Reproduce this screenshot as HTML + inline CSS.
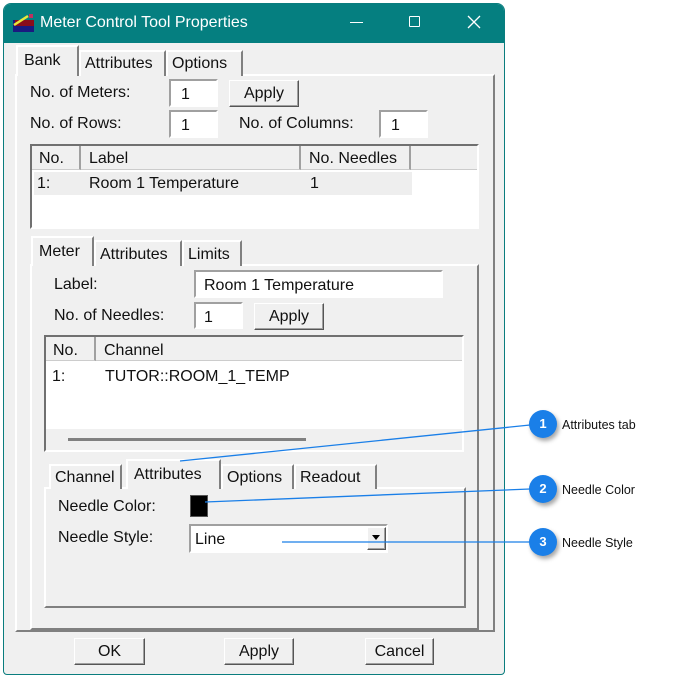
<!DOCTYPE html>
<html><head><meta charset="utf-8"><style>
*{box-sizing:border-box;margin:0;padding:0}
body{width:688px;height:678px;background:#fff;position:relative;overflow:hidden;font-family:"Liberation Sans",Arial,sans-serif;font-size:16px;color:#111}
.a{position:absolute;white-space:nowrap}
.win{left:3px;top:3px;width:502px;height:672px;background:#f0f0f0;border:1px solid #0a7d7e;border-radius:8px 8px 4px 4px;overflow:hidden}
.tb{left:0;top:0;width:500px;height:39px;background:#057f80}
.sunk{border:2px solid;border-color:#a0a0a0 #fff #fff #a0a0a0;background:#fff}
.sunk2{border:2px solid;border-color:#707070 #fff #fff #707070;background:#fff}
.btn{background:#f0f0f0;border:1px solid;border-color:#fff #555 #555 #fff;box-shadow:inset -1px -1px 0 #a0a0a0;text-align:center}
.panel{border:2px solid;border-color:#fff #808080 #808080 #fff}
.tab{background:#f0f0f0;border:2px solid;border-bottom:none;border-color:#fff #808080 #808080 #fff;padding-left:4px}
.hdr{background:#f0f0f0;border-right:2px solid #a0a0a0;border-bottom:1px solid #ccc}
.cir{width:28px;height:28px;border-radius:50%;background:#1a7fe8;color:#fff;font-size:13px;font-weight:bold;text-align:center;line-height:28px;box-shadow:2px 3px 4px rgba(0,0,0,.35)}
.ct{font-size:12.5px;color:#111}
</style></head><body>
<div class="a win">
 <div class="a tb"></div>
</div>
<svg class="a" style="left:13px;top:13px" width="22" height="19"><rect x="0" y="7" width="21" height="12" fill="#1a1a80"/><rect x="2" y="7" width="19" height="6" fill="#8a0d1a"/><path d="M1 12 L15 3" stroke="#e8e83a" stroke-width="2.5"/><rect x="16" y="1" width="4" height="4" fill="#c03060"/></svg>
<div class="a" style="left:40px;top:14px;color:#fff;font-size:16px">Meter Control Tool Properties</div>
<div class="a" style="left:350px;top:22px;width:13px;height:1px;background:#fff"></div>
<div class="a" style="left:409px;top:16px;width:11px;height:11px;border:1px solid #fff;border-radius:1px"></div>
<svg class="a" style="left:467px;top:15px" width="14" height="14"><path d="M1 1L13 13M13 1L1 13" stroke="#fff" stroke-width="1.3"/></svg>

<div class="a panel" style="left:15px;top:74px;width:480px;height:558px"></div>
<div class="a" style="left:477px;top:264px;width:2px;height:364px;background:#808080"></div>
<div class="a tab" style="left:79px;top:50px;width:87px;height:26px;line-height:24px">Attributes</div>
<div class="a tab" style="left:166px;top:50px;width:77px;height:26px;line-height:24px">Options</div>
<div class="a tab" style="left:16px;top:45px;width:63px;height:31px;line-height:28px;padding-left:6px;border-bottom:none">Bank</div>

<div class="a" style="left:30px;top:84px">No. of Meters:</div>
<div class="a sunk" style="left:169px;top:79px;width:49px;height:28px;padding:5px 0 0 10px">1</div>
<div class="a btn" style="left:229px;top:80px;width:70px;height:27px;line-height:26px">Apply</div>
<div class="a" style="left:30px;top:115px">No. of Rows:</div>
<div class="a sunk" style="left:169px;top:110px;width:49px;height:28px;padding:5px 0 0 10px">1</div>
<div class="a" style="left:239px;top:115px">No. of Columns:</div>
<div class="a sunk" style="left:379px;top:110px;width:49px;height:28px;padding:5px 0 0 10px">1</div>

<div class="a sunk2" style="left:30px;top:144px;width:449px;height:85px"></div>
<div class="a hdr" style="left:32px;top:146px;width:49px;height:24px;padding:4px 0 0 7px">No.</div>
<div class="a hdr" style="left:81px;top:146px;width:220px;height:24px;padding:4px 0 0 8px">Label</div>
<div class="a hdr" style="left:301px;top:146px;width:110px;height:24px;padding:4px 0 0 8px">No. Needles</div>
<div class="a" style="left:411px;top:146px;width:66px;height:24px;background:#f0f0f0;border-bottom:1px solid #ccc"></div>
<div class="a" style="left:34px;top:172px;width:378px;height:23px;background:#eeeeee"></div>
<div class="a" style="left:37px;top:175px">1:</div>
<div class="a" style="left:89px;top:175px">Room 1 Temperature</div>
<div class="a" style="left:310px;top:175px">1</div>

<div class="a panel" style="left:30px;top:264px;width:449px;height:366px;border-left-color:#fff"></div>
<div class="a tab" style="left:94px;top:240px;width:88px;height:26px;line-height:25px">Attributes</div>
<div class="a tab" style="left:182px;top:240px;width:60px;height:26px;line-height:25px">Limits</div>
<div class="a tab" style="left:31px;top:236px;width:63px;height:30px;line-height:27px;padding-left:6px">Meter</div>

<div class="a" style="left:54px;top:276px">Label:</div>
<div class="a sunk" style="left:194px;top:270px;width:249px;height:28px;padding:5px 0 0 8px">Room 1 Temperature</div>
<div class="a" style="left:54px;top:307px">No. of Needles:</div>
<div class="a sunk" style="left:194px;top:302px;width:49px;height:27px;padding:5px 0 0 8px">1</div>
<div class="a btn" style="left:254px;top:303px;width:70px;height:27px;line-height:26px">Apply</div>

<div class="a sunk2" style="left:44px;top:335px;width:420px;height:117px;background:#f0f0f0"></div>
<div class="a hdr" style="left:46px;top:337px;width:50px;height:24px;padding:5px 0 0 7px">No.</div>
<div class="a" style="left:96px;top:337px;width:366px;height:24px;padding:5px 0 0 8px;background:#f0f0f0;border-bottom:1px solid #ccc">Channel</div>
<div class="a" style="left:46px;top:361px;width:416px;height:68px;background:#fff"></div>
<div class="a" style="left:52px;top:368px">1:</div>
<div class="a" style="left:105px;top:368px">TUTOR::ROOM_1_TEMP</div>
<div class="a" style="left:68px;top:438px;width:238px;height:3px;background:#808080"></div>

<div class="a panel" style="left:44px;top:487px;width:422px;height:121px"></div>
<div class="a tab" style="left:49px;top:464px;width:73px;height:25px;line-height:24px">Channel</div>
<div class="a tab" style="left:221px;top:464px;width:73px;height:25px;line-height:24px">Options</div>
<div class="a tab" style="left:294px;top:464px;width:83px;height:25px;line-height:24px">Readout</div>
<div class="a tab" style="left:126px;top:459px;width:95px;height:30px;line-height:27px;padding-left:6px">Attributes</div>

<div class="a" style="left:58px;top:498px">Needle Color:</div>
<div class="a" style="left:190px;top:495px;width:18px;height:22px;background:#000;border:1px solid #555"></div>
<div class="a" style="left:58px;top:529px">Needle Style:</div>
<div class="a sunk" style="left:189px;top:524px;width:199px;height:29px;padding:5px 0 0 4px">Line</div>
<div class="a btn" style="left:367px;top:527px;width:19px;height:23px"></div>
<svg class="a" style="left:372px;top:535px" width="9" height="6"><path d="M0 0H8L4 5Z" fill="#000"/></svg>

<div class="a btn" style="left:74px;top:638px;width:71px;height:27px;line-height:26px">OK</div>
<div class="a btn" style="left:224px;top:638px;width:70px;height:27px;line-height:26px">Apply</div>
<div class="a btn" style="left:365px;top:638px;width:69px;height:27px;line-height:26px">Cancel</div>

<svg class="a" style="left:0;top:0" width="688" height="678"><g stroke="#1a7fe8" stroke-width="1.3"><path d="M530 425 L180 461"/><path d="M530 489 L205 502"/><path d="M530 542 L282 542"/></g></svg>
<div class="a cir" style="left:529px;top:410px">1</div>
<div class="a ct" style="left:562px;top:418px">Attributes tab</div>
<div class="a cir" style="left:529px;top:475px">2</div>
<div class="a ct" style="left:562px;top:483px">Needle Color</div>
<div class="a cir" style="left:529px;top:528px">3</div>
<div class="a ct" style="left:562px;top:536px">Needle Style</div>
</body></html>
